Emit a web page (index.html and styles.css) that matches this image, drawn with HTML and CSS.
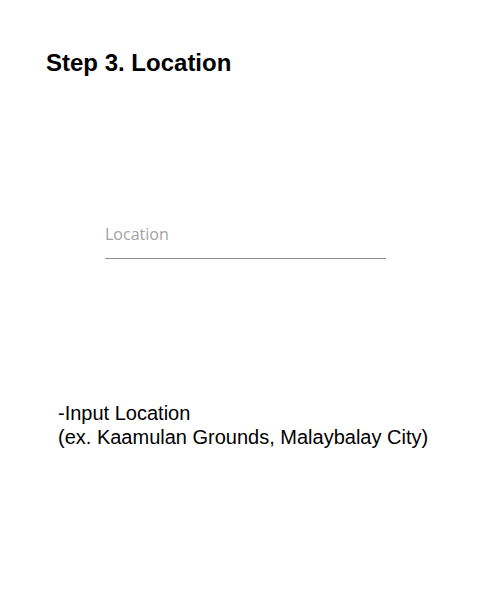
FILE: index.html
```html
<!DOCTYPE html>
<html>
<head>
<meta charset="utf-8">
<link rel="stylesheet" href="styles.css">
</head>
<body>
<main class="page">
  <h1 class="title">Step 3. Location</h1>
  <div class="field">
    <label class="field-label">Location</label>
    <div class="field-line"></div>
  </div>
  <p class="note">-Input Location<br>(ex. Kaamulan Grounds, Malaybalay City)</p>
</main>
</body>
</html>
```

FILE: styles.css
```css
html, body {
  margin: 0;
  padding: 0;
  background: #ffffff;
}
.page {
  width: 500px;
  height: 602px;
  box-sizing: border-box;
  padding-top: 49px;
  display: flex;
  flex-direction: column;
}
.title {
  margin: 0 0 0 46px;
  font-family: "Liberation Sans", Arial, sans-serif;
  font-weight: bold;
  font-size: 24px;
  line-height: 27px;
  color: #000;
}
.field {
  margin: 147px 0 0 105px;
  width: 281px;
  display: flex;
  flex-direction: column;
}
.field-label {
  font-family: "Open Sans", sans-serif;
  font-size: 16px;
  line-height: 22px;
  color: #a3a3a3;
}
.field-line {
  margin-top: 13px;
  height: 1px;
  background: #8c8c8c;
}
.note {
  margin: 142px 0 0 58px;
  font-family: "Liberation Sans", Arial, sans-serif;
  font-size: 20px;
  line-height: 24px;
  color: #000;
}
```
